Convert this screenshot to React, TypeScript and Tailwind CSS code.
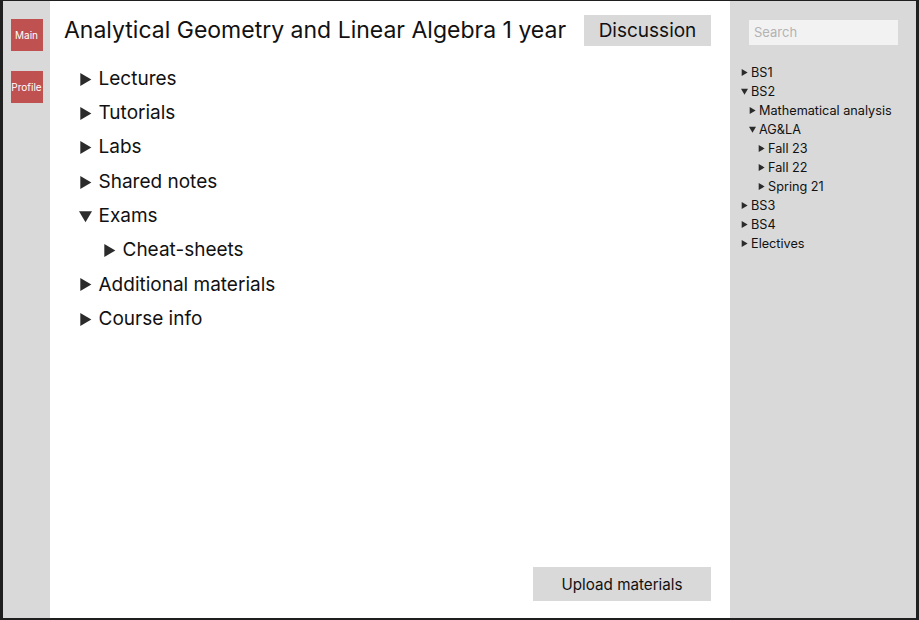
import React from 'react';

const font = { fontFamily: 'Inter, "Noto Sans", sans-serif' };

function Arrow({ open, size }: { open?: boolean; size: 'lg' | 'sm' }) {
  const s = size === 'lg' ? 13 : 7;
  return (
    <svg width={s} height={s} viewBox="0 0 10 10" className="shrink-0">
      {open ? <polygon points="0,1 10,1 5,9.5" fill="#2b2b2b" /> : <polygon points="1,0 9.5,5 1,10" fill="#2b2b2b" />}
    </svg>
  );
}

const sections = [
  { label: 'Lectures', depth: 0 },
  { label: 'Tutorials', depth: 0 },
  { label: 'Labs', depth: 0 },
  { label: 'Shared notes', depth: 0 },
  { label: 'Exams', depth: 0, open: true },
  { label: 'Cheat-sheets', depth: 1 },
  { label: 'Additional materials', depth: 0 },
  { label: 'Course info', depth: 0 },
];

const tree = [
  { label: 'BS1', depth: 0 },
  { label: 'BS2', depth: 0, open: true },
  { label: 'Mathematical analysis', depth: 1 },
  { label: 'AG&LA', depth: 1, open: true },
  { label: 'Fall 23', depth: 2 },
  { label: 'Fall 22', depth: 2 },
  { label: 'Spring 21', depth: 2 },
  { label: 'BS3', depth: 0 },
  { label: 'BS4', depth: 0 },
  { label: 'Electives', depth: 0 },
];

export default function App() {
  return (
    <div style={font} className="h-screen w-full bg-[#1f1f1f] pt-px pl-[3px] pr-[3px] pb-[2px] flex text-[#111]">
      {/* left rail */}
      <div className="w-[47px] bg-[#d9d9d9] flex flex-col items-center pt-[18px] gap-[20px]">
        <button className="w-8 h-8 bg-[#c05151] text-white text-[10px] flex items-center justify-center">Main</button>
        <button className="w-8 h-8 bg-[#c05151] text-white text-[10px] flex items-center justify-center">Profile</button>
      </div>

      {/* main */}
      <div className="flex-1 bg-white flex flex-col">
        <div className="flex items-center justify-between pl-[14px] pr-[19px] pt-[14px]">
          <h1 className="text-[23px] leading-none -mt-[1px]">Analytical Geometry and Linear Algebra 1 year</h1>
          <button className="w-[127px] h-[31px] bg-[#d9d9d9] text-[19px] flex items-center justify-center pt-px">Discussion</button>
        </div>
        <div className="mt-[16px] pl-[29px]">
          {sections.map((s) => (
            <div key={s.label} className={`h-[34.3px] flex items-center gap-[6.5px] text-[19px] ${s.depth ? 'pl-[24px]' : ''}`}>
              <Arrow size="lg" open={s.open} />
              <span>{s.label}</span>
            </div>
          ))}
        </div>
        <div className="mt-auto mb-[17px] mr-[19px] self-end">
          <button className="w-[178px] h-[34px] bg-[#d9d9d9] text-[15.2px] flex items-center justify-center pt-[2px]">Upload materials</button>
        </div>
      </div>

      {/* right sidebar */}
      <div className="w-[186px] bg-[#d9d9d9] pt-[19px]">
        <div className="ml-[19px] w-[149px] h-[25px] bg-[#f2f2f2] flex items-center px-[5px] pt-px text-[13px] text-[#b3b3b3]">Search</div>
        <div className="mt-[18px] pl-[11px] text-[12.7px]">
          {tree.map((t) => (
            <div
              key={t.label}
              className={`h-[19px] flex items-center gap-[3px] ${t.depth === 1 ? 'pl-[8px]' : t.depth === 2 ? 'pl-[17px]' : ''}`}
            >
              <Arrow size="sm" open={t.open} />
              <span>{t.label}</span>
            </div>
          ))}
        </div>
      </div>
    </div>
  );
}
